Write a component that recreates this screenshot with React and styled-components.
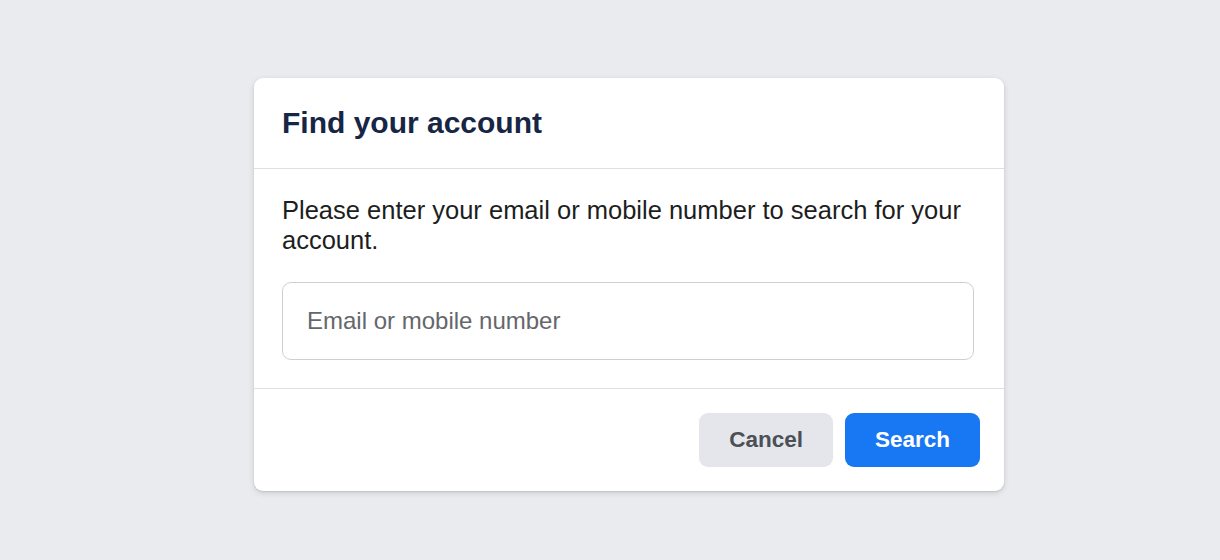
import React from "react";
import styled, { createGlobalStyle } from "styled-components";

const Global = createGlobalStyle`
  html, body { margin: 0; padding: 0; }
  body {
    background: #e9ebee;
    font-family: "Liberation Sans", Arial, Helvetica, sans-serif;
  }
`;

const Page = styled.div`
  min-height: 560px;
  display: flex;
  justify-content: center;
  align-items: flex-start;
  padding: 78px 0 0 38px;
  box-sizing: border-box;
`;

const Card = styled.div`
  width: 750px;
  background: #fff;
  border-radius: 9px;
  box-shadow: 0 1px 2px rgba(0, 0, 0, 0.1), 0 2px 6px rgba(0, 0, 0, 0.12);
  overflow: hidden;
`;

const Header = styled.div`
  height: 91px;
  box-sizing: border-box;
  display: flex;
  align-items: center;
  padding: 0 28px;
  border-bottom: 1px solid #dddfe2;
`;

const Title = styled.h2`
  margin: 0;
  font-size: 30px;
  font-weight: 700;
  color: #172644;
  line-height: 1;
`;

const Body = styled.div`
  padding: 26px 30px 28px 28px;
  border-bottom: 1px solid #dddfe2;
`;

const Text = styled.p`
  margin: 0 0 27px;
  font-size: 25.5px;
  line-height: 30px;
  color: #1c1e21;
`;

const Input = styled.input`
  display: block;
  width: 100%;
  height: 78px;
  box-sizing: border-box;
  border: 1px solid #ccd0d5;
  border-radius: 9px;
  padding: 0 24px;
  font-family: inherit;
  font-size: 24px;
  color: #1c1e21;
  outline: none;
  &::placeholder {
    color: #65676b;
  }
`;

const Footer = styled.div`
  display: flex;
  justify-content: flex-end;
  gap: 12px;
  padding: 24px;
`;

const Button = styled.button`
  height: 54px;
  padding: 0 30px;
  border: none;
  border-radius: 9px;
  font-family: inherit;
  font-size: 22.5px;
  font-weight: 700;
  cursor: pointer;
  background: ${(p) => (p.$primary ? "#1877f2" : "#e4e6eb")};
  color: ${(p) => (p.$primary ? "#ffffff" : "#4b4f56")};
`;

export default function App() {
  return (
    <>
      <Global />
      <Page>
        <Card>
          <Header>
            <Title>Find your account</Title>
          </Header>
          <Body>
            <Text>
              Please enter your email or mobile number to search for your
              account.
            </Text>
            <Input type="text" placeholder="Email or mobile number" />
          </Body>
          <Footer>
            <Button>Cancel</Button>
            <Button $primary>Search</Button>
          </Footer>
        </Card>
      </Page>
    </>
  );
}
